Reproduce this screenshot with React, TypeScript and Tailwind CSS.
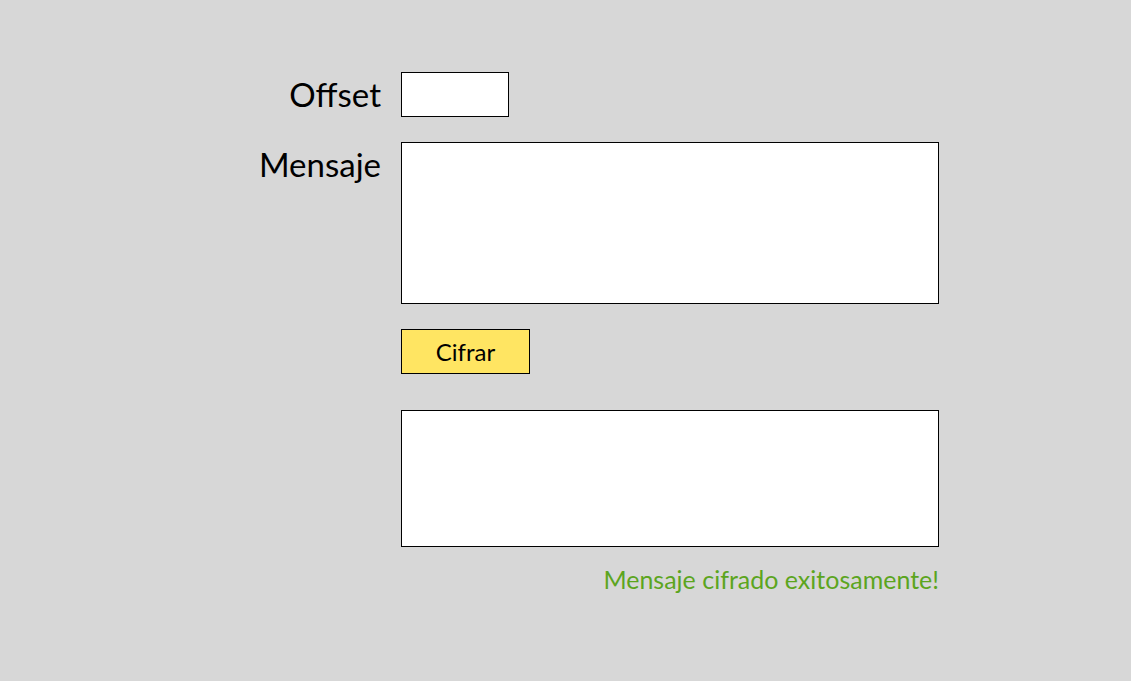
export default function App() {
  return (
    <div className="min-h-[681px] w-full bg-[#d7d7d7] pl-[241px] pt-[72px] font-['Lato',sans-serif] text-black">
      <div className="grid grid-cols-[140px_538px] gap-x-5">
        <label className="text-right text-[33px] leading-[45px]">Offset</label>
        <input className="h-[45px] w-[108px] border border-black bg-white outline-none" />

        <label className="mt-[25px] text-right text-[33px] leading-[45px]">Mensaje</label>
        <textarea className="mt-[25px] h-[162px] resize-none border border-black bg-white outline-none" />

        <div />
        <button className="mt-[25px] h-[45px] w-[129px] border border-black bg-[#ffe562] text-[24px] leading-none">
          Cifrar
        </button>

        <div />
        <textarea className="mt-9 h-[137px] resize-none border border-black bg-white outline-none" />

        <div />
        <p className="mt-[16px] text-right text-[25px] leading-[32px] text-[#5ca51e]">Mensaje cifrado exitosamente!</p>
      </div>
    </div>
  );
}
